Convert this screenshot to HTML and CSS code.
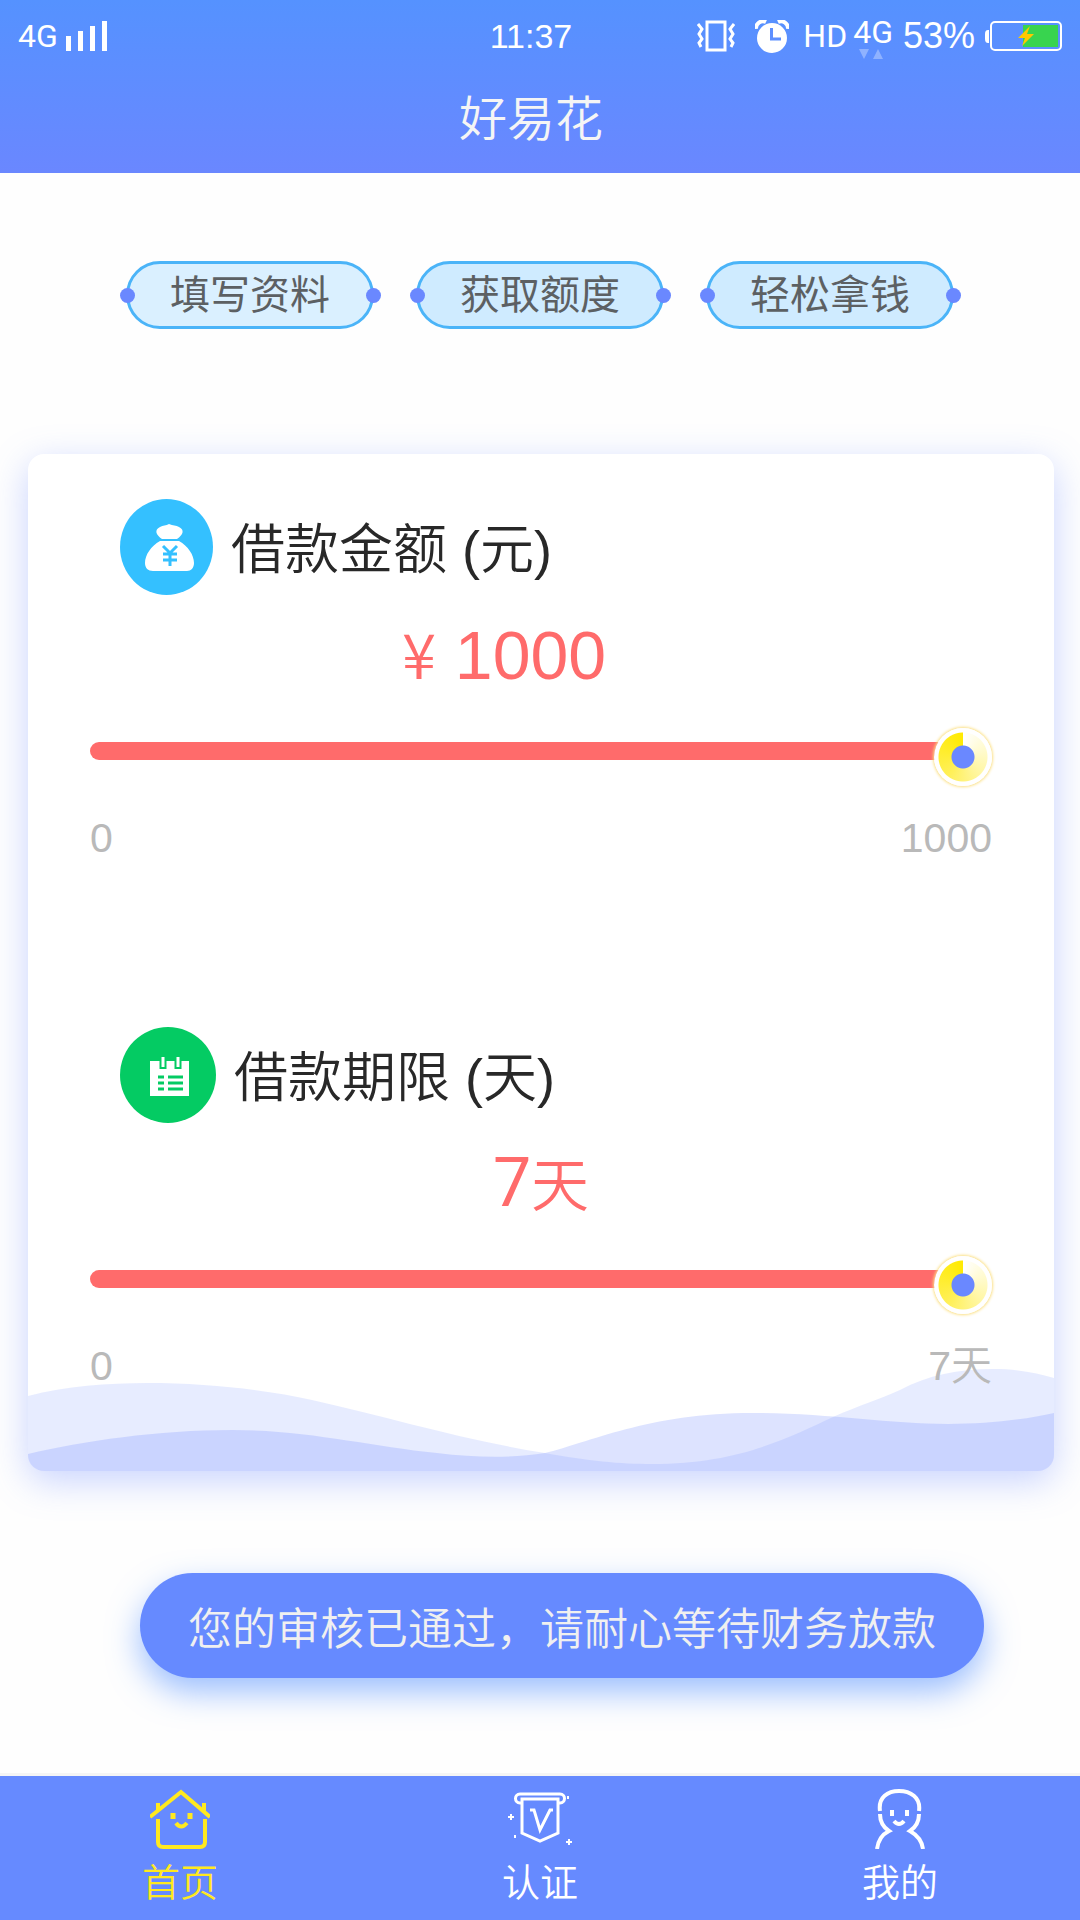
FILE: index.html
```html
<!DOCTYPE html>
<html lang="zh-CN">
<head>
    <meta charset="UTF-8">
    <meta name="viewport" content="width=device-width, initial-scale=1">
    <title>好易花</title>
    <link rel="stylesheet" href="styles.css">
</head>
<body>
<header class="header">
    <div class="status-bar">
        <div class="status-left">
            <span class="network">4G</span>
            <svg class="signal" width="42" height="30" viewBox="0 0 42 30" fill="#fff">
                <path d="M0 15h5v15H0zM12 10h5v20h-5zM24 5h5v25h-5zM36 0h5v30h-5z"/>
            </svg>
        </div>
        <span class="time">11:37</span>
        <div class="status-right">
            <svg width="38" height="32" viewBox="0 0 38 32" fill="none" stroke="#fff">
                <rect x="10" y="2" width="18" height="28" stroke-width="3"/>
                <path d="M1 4l4 5-3 5 3 5-3 4 2 4M37 4l-4 5 3 5-3 5 3 4-2 4" stroke-width="3"/>
            </svg>
            <svg class="alarm" width="34" height="33" viewBox="0 0 34 33">
                <circle cx="17" cy="18" r="15" fill="#fff"/>
                <path d="M1 9a7 7 0 0 1 10-7M33 9a7 7 0 0 0-10-7" fill="none" stroke="#fff" stroke-width="4"/>
                <path d="M16.500 8v11H26" fill="none" stroke="#5d8fff" stroke-width="3"/>
            </svg>
            <span class="network">HD</span>
            <span class="data">
                <span class="network">4G</span>
                <svg class="arrows" width="24" height="10" viewBox="0 0 24 10" fill="#8fb2ff"><path d="M0 0h10L5 10zM14 10h10L19 0z"/></svg>
            </span>
            <span class="percent">53%</span>
            <svg width="77" height="31" viewBox="0 0 77 31">
                <path d="M4 9H3Q0 9 0 13v5q0 4 3 4h1z" fill="#fff"/>
                <rect x="38" y="4" width="35" height="22" fill="#38d44f"/>
                <rect x="6" y="1" width="70" height="28" rx="4" fill="none" stroke="#fff" stroke-width="2"/>
                <path d="M45 5L33 17h7l-3 8 12-12h-7z" fill="#ffc800"/>
            </svg>
        </div>
    </div>
    <h1 class="title">好易花</h1>
</header>
<main class="content">
    <ol class="steps">
        <li class="step step-first">填写资料</li>
        <li class="step">获取额度</li>
        <li class="step">轻松拿钱</li>
    </ol>
    <section class="card">
        <svg class="wave" viewBox="0 0 1026 111" preserveAspectRatio="none" fill="#6a88ff">
            <path fill-opacity=".16" d="M0 36C38 26 80 23 119 23C180 23 240 30 284 40C365 58 430 79 517 93C560 101 592 104 624 104C710 104 760 78 805 57C832 45 850 40 872 30C900 15 930 9 965 9C990 9 1010 13 1026 18V111H0z"/>
            <path fill-opacity=".23" d="M0 94C55 81 130 70 204 70C280 70 340 86 409 93C450 98 485 98 517 93C560 83 620 53 725 53C800 53 860 64 920 64C960 64 1000 59 1026 53V111H0z"/>
        </svg>
        <div class="loan">
            <div class="loan-head">
                <svg width="93" height="96" viewBox="0 0 93 96">
                    <ellipse cx="46.500" cy="48" rx="46.500" ry="48" fill="#34c0ff"/>
                    <path d="M42 40c-6-4-8-9-2-12 3-2 6-1 9-3 4 2 7 1 10 3 6 3 4 8-2 12zM40 42h19c9 5 15 14 15 22 0 5-3 8-7 8H33c-5 0-8-3-8-8 0-8 6-17 15-22z" fill="#fff"/>
                    <path d="M43 47l7 7 7-7M50 54v13M43 55h14M43 61h14" fill="none" stroke="#34c0ff" stroke-width="3"/>
                </svg>
                <label for="amount">借款金额 (元)</label>
            </div>
            <p class="value value-money"><span class="unit unit-yen">¥</span> 1000</p>
            <input class="slider" type="range" id="amount" name="amount" min="0" max="1000" value="1000">
            <div class="range"><span>0</span><span>1000</span></div>
        </div>
        <div class="loan">
            <div class="loan-head">
                <svg width="96" height="96" viewBox="0 0 96 96">
                    <circle cx="48" cy="48" r="48" fill="#04cb63"/>
                    <path d="M30 34h39v35H30z" fill="#fff"/>
                    <path d="M43 33v9M58 33v9" stroke="#04cb63" stroke-width="7"/>
                    <path d="M43 30v10M58 30v10" stroke="#fff" stroke-width="3"/>
                    <path d="M38 50h6M38 56h6M38 62h6M48 50h15M48 56h15M48 62h15" stroke="#04cb63" stroke-width="3"/>
                </svg>
                <label for="days">借款期限 (天)</label>
            </div>
            <p class="value value-days">7<span class="unit">天</span></p>
            <input class="slider" type="range" id="days" name="days" min="0" max="7" value="7">
            <div class="range"><span>0</span><span>7天</span></div>
        </div>
    </section>
    <button class="submit" type="button">您的审核已通过，请耐心等待财务放款</button>
</main>
<nav class="tabs">
    <a class="tab active" href="#home">
        <svg width="60" height="60" viewBox="0 0 60 60" fill="none" stroke="currentColor" stroke-width="4">
            <path d="M0 28L31 3l29 25M8 22v-8M54 22v-8"/>
            <path d="M8 30v23q0 5 5 5h37q5 0 5-5V30M26 34q5 7 11 0" />
            <path d="M23 24v6M40 24v6" stroke-width="5"/>
        </svg>
        首页
    </a>
    <a class="tab" href="#auth">
        <svg width="66" height="60" viewBox="0 0 66 60" fill="none" stroke="currentColor" stroke-width="3">
            <path d="M15 14h-2c-6 0-6-9 0-9h40c6 0 6 9 0 9h-2"/>
            <path d="M15 10h36v34l-18 8-18-8zM23 21h4l6 20 10-20h3" stroke-width="3"/>
            <path d="M4 25v6M1 28h6M62 50v6M59 53h6M8 46v3M61 7v3" stroke-width="2"/>
        </svg>
        认证
    </a>
    <a class="tab" href="#mine">
        <svg width="50" height="60" viewBox="0 0 50 60" fill="none" stroke="currentColor" stroke-width="4">
            <path d="M5 22C3 8 13 2 24 2s22 6 20 20M5 25c0 8 3 13 9 17C6 46 3 52 2 60M44 25c0 8-3 13-9 17 7 4 12 10 13 18"/>
            <path d="M19 32q5 6 10 0" stroke-width="4"/>
            <path d="M17 21v6M32 21v6" stroke-width="4"/>
        </svg>
        我的
    </a>
</nav>
</body>
</html>
```

FILE: styles.css
```css
*{
    box-sizing: border-box;
}
body{
    display: flex;
    flex-direction: column;
    min-height: 100vh;
    margin: 0;
    background: #fefefe;
    font-family: "Liberation Sans", "Noto Sans CJK SC", sans-serif;
    font-weight: 350;
}
.header{
    height: 173px;
    color: #fff;
    background: linear-gradient(#5592ff, #6a87ff);
}
.status-bar{
    display: grid;
    grid-template-columns: 1fr auto 1fr;
    align-items: center;
    height: 72px;
    padding: 0 18px;
}
.status-left,
.status-right{
    display: flex;
    align-items: center;
}
.status-left{
    gap: 8px;
}
.status-right{
    justify-content: flex-end;
    gap: 10px;
}
.alarm{
    margin: 0 4px 0 10px;
}
.network{
    font-family: Roboto, sans-serif;
    font-size: 32px;
    font-weight: 400;
    line-height: 36px;
}
.data{
    position: relative;
    margin: -8px 0 0 -4px;
}
.arrows{
    position: absolute;
    left: 6px;
    bottom: -9px;
}
.time{
    padding-right: 18px;
    font-size: 34px;
}
.percent{
    font-size: 36px;
}
.title{
    margin: 0;
    padding-right: 18px;
    font-size: 48px;
    font-weight: 350;
    line-height: 96px;
    text-align: center;
    color: #f5f5f5;
}
.content{
    padding: 88px 26px 88px 28px;
}
.steps{
    display: flex;
    justify-content: space-between;
    margin: 0 100px 125px 98px;
    padding: 0;
    list-style: none;
}
.step{
    position: relative;
    width: 248px;
    height: 68px;
    border: 3px solid #4bb4f8;
    border-radius: 34px;
    background: #cfebff;
    color: #5c6063;
    font-size: 40px;
    font-weight: 400;
    line-height: 62px;
    text-align: center;
}
.step-first{
    background: #daf0ff;
}
.step::before,
.step::after{
    content: "";
    position: absolute;
    top: 24px;
    width: 15px;
    height: 15px;
    border-radius: 50%;
    background: #6a88ff;
}
.step::before{
    left: -9px;
}
.step::after{
    right: -10px;
}
.card{
    position: relative;
    padding: 45px 62px 81px;
    border-radius: 16px;
    background: #fff;
    box-shadow: 0 10px 36px rgba(106, 136, 255, .36);
}
.wave{
    position: absolute;
    left: 0;
    bottom: 0;
    width: 100%;
    height: 111px;
    border-radius: 0 0 16px 16px;
}
.loan{
    position: relative;
}
.loan + .loan{
    margin-top: 165px;
}
.loan-head{
    display: flex;
    align-items: center;
    gap: 18px;
    height: 96px;
    padding-left: 30px;
    color: #282828;
    font-size: 54px;
    line-height: 80px;
}
.loan-head label{
    padding-top: 6px;
}
.value{
    height: 80px;
    margin: 20px 0 26px;
    color: #ff6b6b;
    font-size: 68px;
    line-height: 80px;
    text-align: center;
}
.value-money{
    padding-right: 74px;
}
.value-days{
    font-family: Roboto, sans-serif;
    font-weight: 400;
}
.unit{
    font-family: "Noto Sans CJK SC", sans-serif;
    font-size: 58px;
    font-weight: 350;
    line-height: 1;
}
.unit-yen{
    font-size: 62px;
}
.slider{
    display: block;
    width: 100%;
    height: 60px;
    margin: 0;
    background: none;
    appearance: none;
}
.slider::-webkit-slider-runnable-track{
    height: 18px;
    border-radius: 9px;
    background: linear-gradient(to right, #ff6b6b calc(100% - 30px), transparent 0);
}
.slider::-webkit-slider-thumb{
    width: 58px;
    height: 58px;
    margin-top: -14px;
    border-radius: 50%;
    background:
        radial-gradient(circle, #6a88ff 11px, transparent 12px),
        radial-gradient(circle, transparent 24px, #fff 25px),
        conic-gradient(#fff, #fff7a8 35%, #fff05a 60%, #ffea00);
    box-shadow: 0 0 3px 1px #fbdf80;
    appearance: none;
}
.range{
    display: flex;
    justify-content: space-between;
    margin-top: 33px;
    color: #b9b9b9;
    font-size: 41px;
    line-height: 48px;
}
.submit{
    display: block;
    width: 844px;
    max-width: 100%;
    height: 105px;
    margin: 102px auto 0 112px;
    padding: 0;
    border: 0;
    border-radius: 53px;
    background: #668aff;
    box-shadow: 0 14px 32px rgba(60, 130, 255, .5);
    color: #f0f0f0;
    font-family: "Noto Sans CJK SC", sans-serif;
    font-size: 44px;
    font-weight: 350;
}
.tabs{
    display: grid;
    grid-template-columns: repeat(3, 1fr);
    height: 147px;
    margin-top: auto;
    border-top: 3px solid #f5f5f5;
    background: #668aff;
}
.tab{
    display: flex;
    flex-direction: column;
    align-items: center;
    gap: 10px;
    padding-top: 13px;
    color: #fff;
    font-size: 38px;
    line-height: 48px;
    text-decoration: none;
}
.tab.active{
    color: #ffe91f;
}
```
